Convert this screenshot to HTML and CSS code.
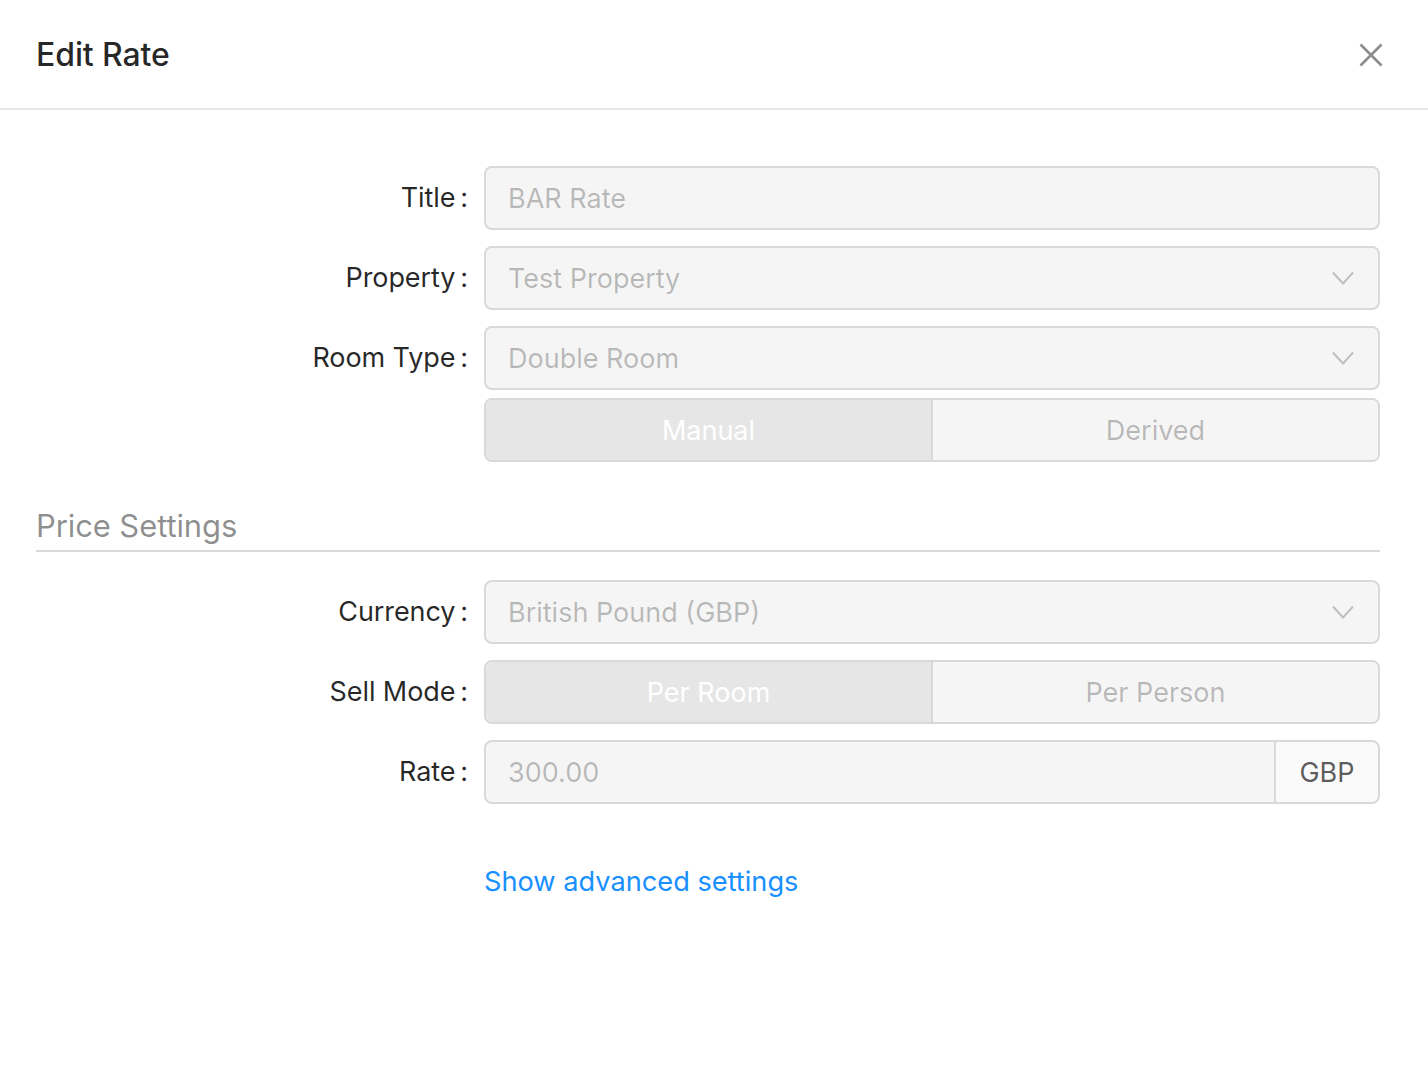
FILE: index.html
```html
<!DOCTYPE html>
<html>
<head>
<meta charset="utf-8">
<link rel="stylesheet" href="styles.css">
</head>
<body>
<div class="modal">
  <div class="modal-header">
    <div class="modal-title">Edit Rate</div>
    <button class="close" aria-label="Close">
      <svg width="24" height="24" viewBox="0 0 24 24"><path d="M1.5 1.5 L22.5 22.5 M22.5 1.5 L1.5 22.5" stroke="#8c8c8c" stroke-width="2.6" fill="none"/></svg>
    </button>
  </div>
  <div class="modal-body">
    <div class="form-row">
      <label class="form-label">Title<span class="colon">:</span></label>
      <div class="control"><div class="input">BAR Rate</div></div>
    </div>
    <div class="form-row">
      <label class="form-label">Property<span class="colon">:</span></label>
      <div class="control"><div class="input select">Test Property<svg class="chev" width="22" height="14" viewBox="0 0 22 14"><path d="M1 1.5 L11 12.5 L21 1.5" stroke="#bfbfbf" stroke-width="2" fill="none"/></svg></div></div>
    </div>
    <div class="form-row">
      <label class="form-label">Room Type<span class="colon">:</span></label>
      <div class="control"><div class="input select">Double Room<svg class="chev" width="22" height="14" viewBox="0 0 22 14"><path d="M1 1.5 L11 12.5 L21 1.5" stroke="#bfbfbf" stroke-width="2" fill="none"/></svg></div></div>
    </div>
    <div class="form-row tight">
      <div class="form-label"></div>
      <div class="control">
        <div class="segmented">
          <div class="seg active">Manual</div>
          <div class="seg">Derived</div>
        </div>
      </div>
    </div>

    <div class="section-title">Price Settings</div>

    <div class="form-row">
      <label class="form-label">Currency<span class="colon">:</span></label>
      <div class="control"><div class="input select">British Pound (GBP)<svg class="chev" width="22" height="14" viewBox="0 0 22 14"><path d="M1 1.5 L11 12.5 L21 1.5" stroke="#bfbfbf" stroke-width="2" fill="none"/></svg></div></div>
    </div>
    <div class="form-row">
      <label class="form-label">Sell Mode<span class="colon">:</span></label>
      <div class="control">
        <div class="segmented">
          <div class="seg active">Per Room</div>
          <div class="seg">Per Person</div>
        </div>
      </div>
    </div>
    <div class="form-row">
      <label class="form-label">Rate<span class="colon">:</span></label>
      <div class="control">
        <div class="input-group">
          <div class="input grouped">300.00</div>
          <div class="addon">GBP</div>
        </div>
      </div>
    </div>
    <div class="form-row link-row">
      <div class="form-label"></div>
      <div class="control"><a class="link" href="#">Show advanced settings</a></div>
    </div>
  </div>
</div>
</body>
</html>
```

FILE: styles.css
```css
* { box-sizing: border-box; }
html, body {
  margin: 0;
  padding: 0;
  background: #fff;
  font-family: Inter, "Noto Sans", "Liberation Sans", sans-serif;
  color: rgba(0,0,0,0.85);
}
.modal { width: 1428px; }
.modal-header {
  height: 110px;
  padding: 0 36px 0 36px;
  border-bottom: 2px solid #e8e8e8;
  display: flex;
  align-items: center;
  justify-content: space-between;
}
.modal-title {
  font-size: 32px;
  font-weight: 500;
  color: rgba(0,0,0,0.85);
  line-height: 44px;
  letter-spacing: -0.1px;
  margin-top: 2px;
}
.close {
  border: 0;
  background: none;
  padding: 0;
  margin-right: 9px;
  margin-top: 2px;
  width: 24px;
  height: 24px;
  display: flex;
}
.modal-body {
  padding: 56px 48px 0 36px;
}
.form-row {
  display: flex;
  align-items: center;
  margin-bottom: 16px;
}
.form-row.tight { margin-top: -8px; }
.form-label {
  width: 448px;
  flex: none;
  padding-right: 16px;
  text-align: right;
  font-size: 27px;
  color: rgba(0,0,0,0.85);
  line-height: 64px;
  letter-spacing: -0.1px;
}
.colon { margin-left: 5px; }
.control { flex: 1; }
.input {
  height: 64px;
  border: 2px solid #d9d9d9;
  border-radius: 8px;
  background: #f5f5f5;
  color: rgba(0,0,0,0.25);
  font-size: 27px;
  padding: 0 22px;
  display: flex;
  align-items: center;
}
.select { justify-content: space-between; }
.chev { margin-right: 2px; }
.segmented {
  display: flex;
  height: 64px;
  border: 2px solid #d9d9d9;
  border-radius: 8px;
  overflow: hidden;
}
.seg {
  flex: 1;
  display: flex;
  align-items: center;
  justify-content: center;
  font-size: 27px;
  background: #f5f5f5;
  color: rgba(0,0,0,0.25);
}
.seg.active {
  background: #e6e6e6;
  color: #fff;
  border-right: 2px solid #d9d9d9;
}
.section-title {
  margin-top: 40px;
  font-size: 31px;
  line-height: 48px;
  color: rgba(0,0,0,0.45);
  border-bottom: 2px solid #d9d9d9;
  margin-bottom: 28px;
  letter-spacing: -0.1px;
}
.input-group { display: flex; }
.input.grouped {
  flex: 1;
  border-radius: 8px 0 0 8px;
  border-right: 0;
}
.addon {
  height: 64px;
  width: 106px;
  border: 2px solid #d9d9d9;
  border-radius: 0 8px 8px 0;
  background: #fafafa;
  color: rgba(0,0,0,0.65);
  font-size: 27px;
  display: flex;
  align-items: center;
  justify-content: center;
}
.link-row { margin-top: 56px; }
.link {
  font-size: 27.2px;
  color: #1890ff;
  text-decoration: none;
  line-height: 44px;
}
```
